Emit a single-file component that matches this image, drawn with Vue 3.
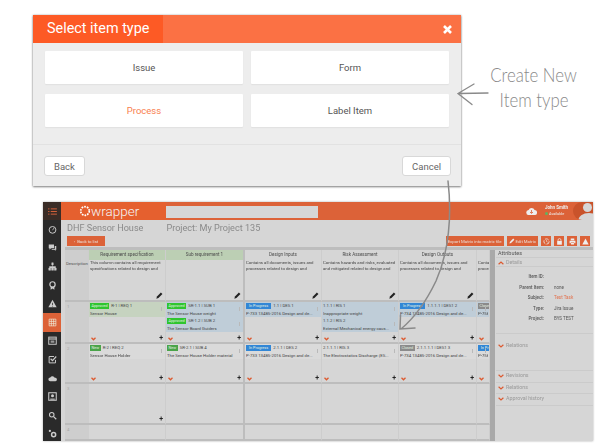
<template>
  <div class="page">
    <div class="top-row">
      <div class="dialog">
        <div class="dialog-head">
          <div class="dialog-title">Select item type</div>
          <svg class="close" width="11" height="11" viewBox="0 0 11 11"><path d="M2 2l7 7M9 2l-7 7" stroke="#fff" stroke-width="2.6" /></svg>
        </div>
        <div class="dialog-body">
          <div v-for="t in itemTypes" :key="t" class="type-card" :class="{ active: t === 'Process' }">{{ t }}</div>
        </div>
        <div class="dialog-foot">
          <button class="btn">Back</button>
          <button class="btn">Cancel</button>
        </div>
      </div>
      <div class="note"><span>Create New</span><span>Item type</span></div>
    </div>

    <div class="app">
      <div class="sidebar">
        <div class="side-top">
          <svg width="9" height="7" viewBox="0 0 10 8"><path d="M0 1h1.500M3 1h7M0 4h1.500M3 4h7M0 7h1.500M3 7h7" stroke="#d8633a" stroke-width="1.100" /></svg>
        </div>
        <div v-for="(d, i) in sideIcons" :key="i" class="side-item" :class="{ on: i === 5 }">
          <svg width="9" height="9" viewBox="0 0 12 12" v-html="d"></svg>
        </div>
      </div>
      <div class="main">
        <div class="topbar">
          <div class="logo">
            <svg width="12" height="12" viewBox="0 0 14 14"><circle cx="7" cy="7" r="5" fill="none" stroke="#fff" stroke-width="2" stroke-dasharray="2 1.140" /></svg>
            <span>wrapper</span>
          </div>
          <div class="search"></div>
          <div class="user">
            <svg width="11" height="8" viewBox="0 0 11 8"><path d="M3 8a2.500 2.500 0 0 1-.4-5A3.200 3.200 0 0 1 8.600 3 2.500 2.500 0 0 1 8.500 8z" fill="#eee" /><path d="M5.500 3v3M4 5l1.500 1.500L7 5" stroke="#dc6238" stroke-width=".8" fill="none" /></svg>
            <div class="user-text">
              <div class="user-name">John Smith</div>
              <div class="user-state"><i></i>Available</div>
            </div>
            <div class="avatar"><i></i><b></b></div>
          </div>
        </div>
        <div class="title-row">
          <span>DHF Sensor House</span>
          <span>Project: My Project 135</span>
        </div>
        <div class="toolbar">
          <button class="tool wide back">&#8249;&nbsp; Back to list</button>
          <div class="tools">
            <button class="tool wide">Export Matrix into matrix file</button>
            <button class="tool wide">
              <svg width="6" height="6" viewBox="0 0 6 6"><path d="M.5 5.500l.4-1.600L4.200.6l1.200 1.200L2.100 5.100z" fill="#eee" /></svg>
              Edit Matrix
            </button>
            <button v-for="(d, i) in toolIcons" :key="i" class="tool square">
              <svg width="7" height="7" viewBox="0 0 12 12" v-html="d"></svg>
            </button>
          </div>
        </div>

        <div class="work">
          <div class="matrix">
            <div class="head-cell blank"></div>
            <div v-for="(c, n) in columns" :key="c.name" class="head-cell" :class="{ green: c.green, split: n === 1 }">{{ c.name }}</div>
            <div class="head-cell"></div>

            <div class="num tall">Description</div>
            <div v-for="(c, n) in columns" :key="c.name + 'd'" class="desc" :class="{ split: n === 1 }">
              <p>{{ c.desc }}</p>
              <svg class="pencil" width="7" height="7" viewBox="0 0 6 6"><path d="M.3 5.700l.5-1.800L4.200.5l1.300 1.300L2.100 5.200z" fill="#222" /></svg>
            </div>
            <div class="desc"><p class="nowrap">Contains all<br />processes</p></div>

            <template v-for="(row, r) in rows" :key="r">
              <div class="num">{{ r + 1 }}</div>
              <div v-for="(cell, n) in row" :key="n" class="cell" :class="{ split: n === 1 }">
                <div v-for="item in cell" :key="item.id + item.text" class="card" :class="item.tint">
                  <div class="card-top">
                    <span v-if="item.badge" class="badge" :class="item.badge">{{ badgeText[item.badge] }}</span>
                    {{ item.id }}
                  </div>
                  <div class="card-text">{{ item.text }}</div>
                </div>
                <svg v-if="cell.length" class="chev" width="5" height="4" viewBox="0 0 5 4"><path d="M.5.800l2 2 2-2" stroke="#dc5a30" stroke-width="1.300" fill="none" /></svg>
                <span v-if="cell.length && n < 5" class="plus">+</span>
              </div>
            </template>

            <div class="num">3</div>
            <div v-for="n in 6" :key="'e' + n" class="cell" :class="{ split: n === 2 }"><span v-if="n === 1" class="plus">+</span></div>
            <div class="num">4</div>
            <div v-for="n in 6" :key="'f' + n" class="cell" :class="{ split: n === 2 }"></div>
          </div>
          <div class="scroll"></div>
          <div class="attrs">
            <div class="attrs-title">Attributes</div>
            <div class="section">
              <svg width="6" height="4" viewBox="0 0 5 3"><path d="M.5 2.500l2-1.800 2 1.800" stroke="#dc5a30" stroke-width="1" fill="none" /></svg>
              Details
            </div>
            <div class="fields">
              <template v-for="f in fields" :key="f[0]">
                <span class="f-label">{{ f[0] }}</span>
                <span class="f-value" :class="{ hot: f[0] === 'Subject:' }">{{ f[1] }}</span>
              </template>
            </div>
            <div v-for="s in sections" :key="s.name + s.h" class="section" :class="{ big: s.h > 20 }" :style="{ height: s.h + 'px' }">
              <svg width="6" height="4" viewBox="0 0 5 3"><path d="M.5.500l2 1.800 2-1.800" stroke="#dc5a30" stroke-width="1" fill="none" /></svg>
              {{ s.name }}
            </div>
          </div>
        </div>
      </div>
    </div>

    <svg class="arrows" width="600" height="446" viewBox="0 0 600 446">
      <g fill="none" stroke="#8a8a8a" stroke-linecap="round">
        <path stroke-width="1.300" d="M488 93L459 93.500M474 84L458 93.500L472 104.500" />
        <path stroke-width="1.500" d="M448 181C452 215 449 252 436 281C425 304 413 319 401 329M400.500 315L400 329L415 328" />
      </g>
    </svg>
  </div>
</template>

<script setup>
const itemTypes = ['Issue', 'Form', 'Process', 'Label Item']

const sideIcons = [
  '<circle cx="6" cy="6.500" r="4.500" fill="none" stroke="#ccc" stroke-width="1.300"/><path d="M6 7l2-3" stroke="#ccc"/>',
  '<path d="M1 2h7v5H4L2 9V7H1z" fill="#ccc"/><path d="M9 4h2v5h-1v1.500L8.500 9H5V8h4z" fill="#ccc"/>',
  '<path d="M5 1h2v3H5zM1 8h2.500v3H1zM4.800 8h2.500v3H4.800zM8.500 8H11v3H8.500zM2 8V6h8v2M6 4v4" fill="#ccc" stroke="#ccc" stroke-width=".6"/>',
  '<circle cx="6" cy="4.500" r="3.500" fill="none" stroke="#ccc" stroke-width="1.600"/><path d="M3.500 7.500v4l2.500-1.500 2.500 1.500v-4" fill="#ccc"/>',
  '<path d="M6 1l5.500 10H.5z" fill="#ccc"/><path d="M6 5v3M6 9v1" stroke="#2b2b2b"/>',
  '<path d="M1.500 1.500h9v9h-9zM1.500 4.500h9M1.500 7.500h9M4.500 1.500v9M7.500 1.500v9" fill="none" stroke="#eed" stroke-width=".9"/>',
  '<rect x="1" y="1.500" width="10" height="9.500" fill="none" stroke="#ccc" stroke-width="1.300"/><path d="M1 4h10" stroke="#ccc" stroke-width="1.500"/><path d="M3.500 6h5v3h-5z" fill="#999"/>',
  '<path d="M10 6.500V10.500H1.500V2H8" fill="none" stroke="#ccc" stroke-width="1.300"/><path d="M3.500 5l2.500 2.500L11 2" fill="none" stroke="#ccc" stroke-width="1.600"/>',
  '<path d="M3 9.500a2.500 2.500 0 0 1 0-5 3.500 3.500 0 0 1 6 .5 2.300 2.300 0 0 1 1 4.500z" fill="#ccc"/>',
  '<rect x="1" y="1" width="10" height="10" fill="none" stroke="#ccc" stroke-width="1.400"/><circle cx="6" cy="5" r="2" fill="#ccc"/><path d="M3 9.500h6" stroke="#ccc" stroke-width="1.400"/>',
  '<circle cx="5" cy="5" r="3" fill="none" stroke="#ccc" stroke-width="1.400"/><path d="M7.500 7.500L11 11" stroke="#ccc" stroke-width="1.600"/>',
  '<circle cx="2.500" cy="2.500" r="1.500" fill="#ccc"/><circle cx="7.500" cy="7.500" r="2.700" fill="none" stroke="#ccc" stroke-width="2"/>'
]

const toolIcons = [
  '<circle cx="6" cy="6" r="4.500" fill="none" stroke="#eee" stroke-width="1.400" stroke-dasharray="7 2"/><path d="M6 3.500V6l2 1" stroke="#eee" fill="none"/>',
  '<rect x="2" y="5" width="8" height="6.500" fill="#eee"/><path d="M3.500 5V3.500a2.500 2.500 0 0 1 5 0V5" fill="none" stroke="#eee" stroke-width="1.300"/>',
  '<path d="M3 1h6v3H3zM1 4.500h10V9H9V7.500H3V9H1zM3.500 8.500h5V11h-5z" fill="#eee"/>',
  '<path d="M6 1l5.500 10H.5z" fill="#eee"/>'
]

const desc1 = 'Contains all documents, issues and processes related to design and'
const columns = [
  { name: 'Requirement specification', green: true, desc: 'This column contains all requirement specifications related to design and' },
  { name: 'Sub requirement 1', green: true, desc: '' },
  { name: 'Design Inputs', desc: desc1 },
  { name: 'Risk Assessment', desc: 'Contains hazards and risks, evaluated and mitigated related to design and' },
  { name: 'Design Outputs', desc: desc1 }
]

const badgeText = { approved: 'Approved', progress: 'In Progress', fresh: 'New', closed: 'Closed' }
const design = 'P-733 13485-2016 Design and de...'
const output = 'P-734 13485-2016 Design and de...'

const rows = [
  [
    [{ badge: 'approved', id: 'R-1 | REQ 1', text: 'Sensor House', tint: 'g' }],
    [
      { badge: 'approved', id: 'SR-1.1 | SUB 1', text: 'The Sensor House weight', tint: 'b' },
      { badge: 'approved', id: 'SR-1.2 | SUB 2', text: 'The Sensor Board Guiders', tint: 'b' }
    ],
    [{ badge: 'progress', id: '1.1 | DES 1', text: design, tint: 'b' }],
    [
      { id: '1.1.1 | RIS 1', text: 'Inappropriate weight', tint: 'b' },
      { id: '1.1.2 | RIS 2', text: 'External Mechanical energy caus...', tint: 'b' }
    ],
    [{ badge: 'progress', id: '1.1.1.1 | DES1 2', text: output, tint: 'b' }],
    [{ badge: 'closed', id: '', text: 'P-756', tint: 'b' }]
  ],
  [
    [{ badge: 'fresh', id: 'R-2 | REQ 2', text: 'Sensor House Holder' }],
    [{ badge: 'fresh', id: 'SR-2.1 | SUB 4', text: 'The Sensor House Holder material' }],
    [{ badge: 'progress', id: '2.1.1 | DES 2', text: design }],
    [{ id: '2.1.1.1 | RIS 3', text: 'The Electrostatics Discharge (ES...' }],
    [{ badge: 'closed', id: '2.1.1.1.1 | DES1 3', text: output }],
    [{ badge: 'progress', id: '', text: 'P-756' }]
  ]
]

const fields = [
  ['Item ID:', ''],
  ['Parent Item:', 'none'],
  ['Subject:', 'Test Task'],
  ['Type:', 'Jira Issue'],
  ['Project:', 'BYS TEST']
]

const sections = [
  { name: 'Relations', h: 37 },
  { name: 'Revisions', h: 12 },
  { name: 'Relations', h: 11 },
  { name: 'Approval history', h: 12 }
]
</script>

<style>
html, body { margin: 0; background: #fff; }
</style>

<style scoped>
.page {
  position: relative;
  width: 600px;
  height: 446px;
  overflow: hidden;
  background: #fff;
  font-family: Roboto, "Liberation Sans", sans-serif;
}
.top-row {
  display: flex;
  padding: 15px 0 0 33px;
  height: 171px;
}
.dialog {
  width: 428px;
  height: 171px;
  display: flex;
  flex-direction: column;
  background: #ededed;
  box-shadow: 0 1px 2px rgba(0, 0, 0, .45), 0 0 2px rgba(0, 0, 0, .25);
}
.dialog-head {
  height: 28px;
  flex: none;
  display: flex;
  justify-content: space-between;
  align-items: center;
  background: #fb7144;
  padding-right: 8px;
}
.dialog-title {
  width: 116px;
  height: 28px;
  padding-left: 14px;
  line-height: 28px;
  font-size: 14.400px;
  color: #fff;
  background: #fd5a25;
}
.close { display: block; }
.dialog-body {
  flex: 1;
  display: grid;
  grid-template-columns: 198px 198px;
  grid-template-rows: 33px 33px;
  gap: 10px 8px;
  padding: 8px 12px 0;
  border-bottom: 1px solid #e2e2e2;
}
.type-card {
  display: flex;
  align-items: center;
  justify-content: center;
  background: #fff;
  border-radius: 1px;
  box-shadow: 0 1px 1px #e0e0e0;
  font-size: 9.500px;
  color: #555;
}
.type-card.active { color: #f98050; }
.dialog-foot {
  height: 41px;
  flex: none;
  box-sizing: border-box;
  padding: 11px 10px 0 11px;
  display: flex;
  justify-content: space-between;
  align-items: flex-start;
}
.btn {
  height: 20px;
  padding: 0 9px;
  background: #fff;
  border: 1px solid #d8d8d8;
  border-radius: 3px;
  font: 9.500px Roboto, sans-serif;
  color: #666;
}
.note {
  margin: 47px 0 0 27px;
  width: 92px;
  display: flex;
  flex-direction: column;
  align-items: center;
  font-family: Lato, sans-serif;
  font-weight: 300;
  font-size: 20px;
  line-height: 25px;
  color: #8a8a8a;
}
.note span {
  white-space: nowrap;
  transform: scaleX(.84);
}
.app {
  display: flex;
  width: 550px;
  height: 239px;
  margin: 16px 0 0 43px;
  overflow: hidden;
  background: #d6d6d6;
  box-shadow: 0 0 2px rgba(0, 0, 0, .35);
  filter: blur(.35px);
}
.sidebar {
  width: 18px;
  flex: none;
  background: #2a2a2a;
}
.side-top {
  height: 18px;
  display: flex;
  align-items: center;
  justify-content: center;
  background: #3a2c26;
}
.side-item {
  height: 18.600px;
  display: flex;
  align-items: center;
  justify-content: center;
}
.side-item.on { background: #dc6238; }
.main {
  flex: 1;
  min-width: 0;
  display: flex;
  flex-direction: column;
}
.topbar {
  height: 18px;
  flex: none;
  display: flex;
  align-items: center;
  background: #dc6238;
}
.logo {
  width: 105px;
  height: 18px;
  flex: none;
  box-sizing: border-box;
  padding-left: 18px;
  display: flex;
  align-items: center;
  background: #e5602f;
  color: #f4f4f4;
  font-size: 13.500px;
  font-weight: 300;
}
.search {
  width: 152px;
  height: 12px;
  margin-top: 1px;
  flex: none;
  background: #d6d6d6;
}
.user {
  flex: 1;
  display: flex;
  align-items: center;
  justify-content: flex-end;
  height: 18px;
}
.user-text {
  margin-left: 8px;
  width: 28px;
  color: #eee;
  font-size: 4.500px;
  line-height: 6px;
}
.user-name { font-weight: 700; }
.user-state { font-size: 3.800px; }
.user-state i {
  display: inline-block;
  width: 3px;
  height: 3px;
  border-radius: 50%;
  background: #5fb55f;
  margin-right: 1px;
}
.avatar {
  position: relative;
  width: 20px;
  height: 18px;
  overflow: hidden;
  flex: none;
  background: #c9532b;
  border-radius: 9px 0 0 9px;
}
.avatar b {
  position: absolute;
  left: 5px;
  top: 11px;
  width: 22px;
  height: 16px;
  border-radius: 50%;
  background: #d6d6d6;
}
.avatar i {
  position: absolute;
  left: 10px;
  top: 1px;
  width: 9px;
  height: 9px;
  border-radius: 50%;
  background: #d6d6d6;
}
.title-row {
  height: 16px;
  flex: none;
  padding-left: 6px;
  display: flex;
  align-items: center;
  gap: 23px;
  color: #8a8a8a;
  font-size: 9.100px;
}
.toolbar {
  height: 11px;
  flex: none;
  box-sizing: border-box;
  padding: 0 3px 0 6px;
  display: flex;
  justify-content: space-between;
  align-items: flex-start;
}
.tools { display: flex; gap: 3px; }
.tool {
  height: 10px;
  padding: 0;
  border: 0;
  background: #dc6238;
  color: #eadfd9;
  font: 4.300px Roboto, sans-serif;
  display: flex;
  align-items: center;
  justify-content: center;
  gap: 1px;
}
.tool.wide { padding: 0 2px; }
.tool.back { width: 38px; }
.tool.square { width: 10px; }
.work {
  flex: 1;
  min-height: 0;
  display: flex;
  border-top: 3px solid #bdbdbd;
  margin-left: 4px;
}
.matrix {
  width: 425px;
  flex: none;
  overflow: hidden;
  display: grid;
  grid-template-columns: 24px 77px 79px 77px 77px 78px 13px;
  grid-template-rows: 10px 42px 42px 40px 41px 16px;
  font-size: 4.300px;
  color: #555;
  background: #d6d6d6;
}
.head-cell {
  position: relative;
  text-align: center;
  line-height: 10px;
  font-size: 4.600px;
  color: #4d4d4d;
  border-right: 1px solid #cdcdcd;
  overflow: hidden;
}
.head-cell.blank, .num { background: #cecece; }
.head-cell.green { background: #bccfb4; }
.num {
  padding: 2px 0 0 2px;
  border-bottom: 2px solid #bdbdbd;
  color: #a8a8a8;
}
.num.tall { color: #555; padding: 1px 0 0 1px; }
.desc {
  position: relative;
  border-right: 1px solid #cdcdcd;
  border-bottom: 2px solid #bdbdbd;
  overflow: hidden;
}
.desc p { margin: 0; padding: 0 1px; line-height: 5.500px; color: #444; }
.desc p.nowrap { white-space: nowrap; }
.pencil { position: absolute; right: 2px; bottom: 1px; }
.cell {
  position: relative;
  border-right: 1px solid #cdcdcd;
  border-bottom: 2px solid #bdbdbd;
  overflow: hidden;
}
.head-cell.split, .desc.split, .cell.split { border-right: 2px solid #bdbdbd; }
.card {
  position: relative;
  padding: 1px 1px 0;
  height: 15px;
  box-sizing: border-box;
  background: #dadada;
}
.card.g { background: #c6d3c0; }
.card.b { background: #bfcdd8; }
.card::after {
  content: "";
  position: absolute;
  right: 3px;
  top: 5px;
  width: 1px;
  height: 4px;
  background: #b9b9b9;
}
.card-top {
  height: 6px;
  line-height: 6px;
  white-space: nowrap;
  color: #444;
}
.card-text {
  margin-top: 1.500px;
  line-height: 5.500px;
  white-space: nowrap;
  overflow: hidden;
  color: #444;
}
.badge {
  display: inline-block;
  padding: 0 1.500px;
  margin-right: 1px;
  line-height: 5.500px;
  color: #e4efe0;
  font-size: 3.800px;
}
.badge.approved { background: #2fc52f; }
.badge.progress { background: #3287d6; padding: 0 3px; }
.badge.fresh { background: #4aa44a; }
.badge.closed { background: #8b8b8b; }
.chev { position: absolute; left: 2px; bottom: 1.500px; }
.plus {
  position: absolute;
  right: 2px;
  bottom: 0;
  font-size: 7px;
  line-height: 7px;
  font-weight: 700;
  color: #222;
}
.scroll {
  width: 5px;
  flex: none;
  background: #a9a9a9;
}
.attrs {
  flex: 1;
  min-width: 0;
  padding-left: 1px;
  font-size: 4.500px;
  color: #555;
}
.attrs-title {
  height: 7px;
  padding-left: 2px;
  line-height: 7px;
  font-size: 5.500px;
  border-bottom: 1px solid #cbcbcb;
}
.section {
  height: 9px;
  box-sizing: border-box;
  padding-left: 2px;
  display: flex;
  align-items: flex-start;
  gap: 2px;
  line-height: 9px;
  font-size: 5.300px;
  color: #999;
  border-bottom: 1px solid #cbcbcb;
}
.section svg { margin-top: 3px; }
.section.big { padding-top: 7px; }
.fields {
  height: 67px;
  box-sizing: border-box;
  padding-top: 7px;
  display: grid;
  grid-template-columns: 48px 1fr;
  grid-auto-rows: 10.500px;
  column-gap: 10px;
  border-bottom: 1px solid #cbcbcb;
}
.f-label { text-align: right; font-weight: 500; }
.f-value.hot { color: #e2704c; }
.arrows {
  position: absolute;
  left: 0;
  top: 0;
  pointer-events: none;
}
</style>
